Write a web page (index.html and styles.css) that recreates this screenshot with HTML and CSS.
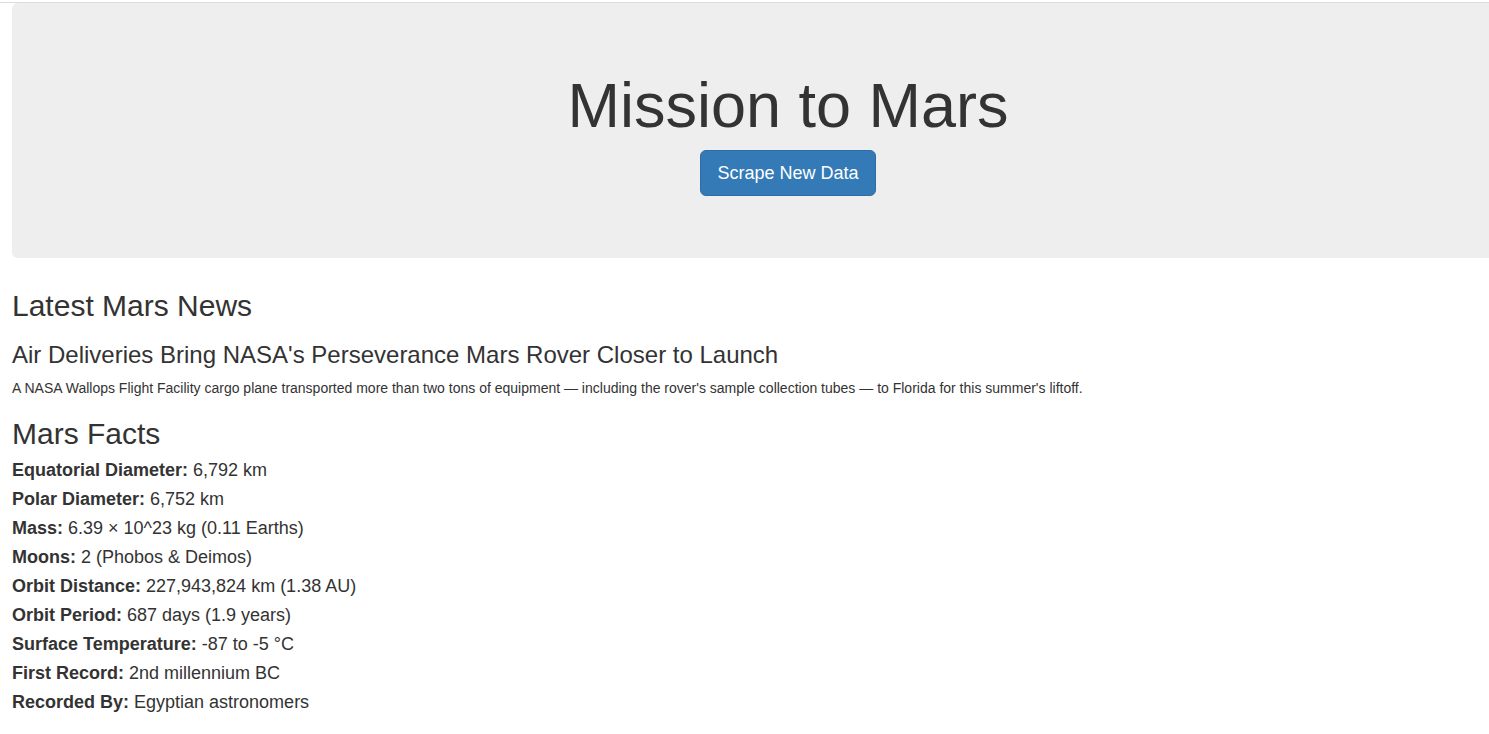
FILE: index.html
```html
<!DOCTYPE html>
<html lang="en">
<head>
<meta charset="utf-8">
<title>Mission to Mars</title>
<link rel="stylesheet" href="styles.css">
</head>
<body>
<div class="topline"></div>
<div class="jumbotron">
  <h1 class="title">Mission to Mars</h1>
  <div class="actions"><a class="btn" href="#">Scrape New Data</a></div>
</div>
<main class="content">
  <h2 class="section-title">Latest Mars News</h2>
  <h3 class="news-title">Air Deliveries Bring NASA's Perseverance Mars Rover Closer to Launch</h3>
  <p class="news-body">A NASA Wallops Flight Facility cargo plane transported more than two tons of equipment — including the rover's sample collection tubes — to Florida for this summer's liftoff.</p>
  <h2 class="section-title facts-title">Mars Facts</h2>
  <div class="facts">
    <div class="fact"><b>Equatorial Diameter:</b> 6,792 km</div>
    <div class="fact"><b>Polar Diameter:</b> 6,752 km</div>
    <div class="fact"><b>Mass:</b> 6.39 × 10^23 kg (0.11 Earths)</div>
    <div class="fact"><b>Moons:</b> 2 (Phobos &amp; Deimos)</div>
    <div class="fact"><b>Orbit Distance:</b> 227,943,824 km (1.38 AU)</div>
    <div class="fact"><b>Orbit Period:</b> 687 days (1.9 years)</div>
    <div class="fact"><b>Surface Temperature:</b> -87 to -5 °C</div>
    <div class="fact"><b>First Record:</b> 2nd millennium BC</div>
    <div class="fact"><b>Recorded By:</b> Egyptian astronomers</div>
  </div>
</main>
</body>
</html>
```
FILE: styles.css
```css
html, body {
  overflow: hidden;
}
body {
  margin: 0;
  font-family: "Liberation Sans", Arial, sans-serif;
  color: #333;
  background: #fff;
}
.topline {
  margin-top: 2px;
  height: 1px;
  background: #dcdcdc;
}
.jumbotron {
  margin-left: 12px;
  width: 1552px;
  background: #eeeeee;
  border-radius: 6px;
  padding: 68px 0 62px;
  text-align: center;
}
.title {
  margin: 0 0 10px;
  font-size: 63px;
  line-height: 69.3px;
  font-weight: 500;
}
.actions {
  height: 46px;
}
.btn {
  display: inline-block;
  box-sizing: border-box;
  height: 46px;
  padding: 10px 16px;
  font-size: 18px;
  line-height: 24px;
  color: #fff;
  background: #337ab7;
  border: 1px solid #2e6da4;
  border-radius: 6px;
  text-decoration: none;
}
.content {
  margin-left: 12px;
}
.section-title {
  margin: 31px 0 0;
  font-size: 30px;
  line-height: 33px;
  font-weight: 500;
}
.news-title {
  margin: 20px 0 0;
  font-size: 24px;
  line-height: 26.4px;
  font-weight: 500;
}
.news-body {
  margin: 9px 0 0;
  font-size: 14px;
  line-height: 20px;
}
.facts-title {
  margin-top: 19px;
}
.facts {
  margin-top: 6px;
  font-size: 18px;
  line-height: 29px;
}
.fact b {
  font-weight: 700;
}
```
